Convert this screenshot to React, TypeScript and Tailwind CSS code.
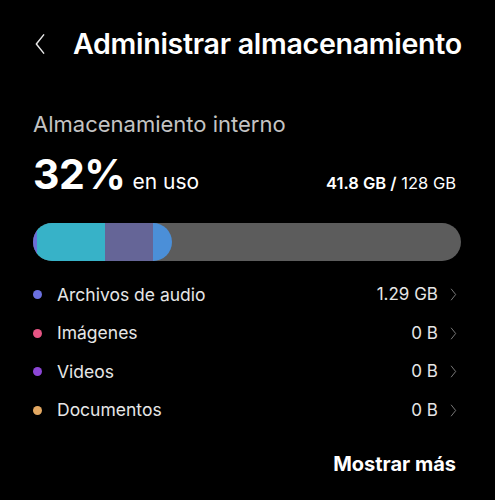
import React from 'react';

interface Category {
  label: string;
  value: string;
  dot: string;
}

const categories: Category[] = [
  { label: 'Archivos de audio', value: '1.29 GB', dot: 'bg-[#6b70e0]' },
  { label: 'Imágenes', value: '0 B', dot: 'bg-[#e65584]' },
  { label: 'Videos', value: '0 B', dot: 'bg-[#8c46d6]' },
  { label: 'Documentos', value: '0 B', dot: 'bg-[#e3a862]' },
];

const Chevron: React.FC<{ className?: string; dir?: 'left' | 'right' }> = ({ className, dir = 'right' }) => (
  <svg className={className} viewBox="0 0 12 24" fill="none" stroke="currentColor" strokeWidth={1.6} strokeLinecap="round" strokeLinejoin="round">
    {dir === 'right' ? <path d="M2 2l8 10-8 10" /> : <path d="M10 2L2 12l8 10" />}
  </svg>
);

const CategoryRow: React.FC<{ item: Category }> = ({ item }) => (
  <div className="flex items-center h-[38.5px]">
    <span className={`w-[9px] h-[9px] rounded-full ${item.dot}`} />
    <span className="ml-[15px] text-[17.5px] text-[#e6e6e6] flex-1">{item.label}</span>
    <span className="text-[17px] text-[#e6e6e6]">{item.value}</span>
    <Chevron className="w-[7px] h-[13px] ml-[12px] mr-[4px] text-[#8a8a8a]" />
  </div>
);

export default function App() {
  return (
    <div className="w-[495px] h-[500px] bg-black text-white overflow-hidden" style={{ fontFamily: 'Inter, "Noto Sans", sans-serif' }}>
      {/* Header */}
      <div className="flex items-center pl-[34px] pt-[26px] h-[62px]">
        <Chevron dir="left" className="w-[12px] h-[22px] text-[#e8e8e8]" />
        <h1 className="ml-[27px] text-[28.6px] font-semibold leading-[36px] tracking-[-0.3px]">Administrar almacenamiento</h1>
      </div>

      <div className="px-[33px] pr-[34px]">
        <div className="mt-[48px] text-[22px] leading-[28px] text-[#c4c4c4]">Almacenamiento interno</div>

        <div className="flex items-baseline mt-[14px]">
          <span className="text-[41px] font-bold leading-[44px] tracking-[-0.5px]">32%</span>
          <span className="ml-[7px] text-[21px]">en uso</span>
          <span className="ml-auto text-[16.5px] mr-[5px]">
            <span className="font-semibold">41.8 GB /</span> 128 GB
          </span>
        </div>

        {/* Usage bar */}
        <div className="mt-[25px] h-[38px] w-full rounded-full bg-[#5c5c5c] overflow-hidden flex">
          <div className="flex h-full w-[139px] rounded-r-full overflow-hidden">
            <div className="w-[4px] bg-[#6b6fd8]" />
            <div className="w-[68px] bg-[#37b2c8]" />
            <div className="w-[48px] bg-[#656597]" />
            <div className="flex-1 bg-[#4b8fd8]" />
          </div>
        </div>

        <div className="mt-[15px]">
          {categories.map((c) => (
            <CategoryRow key={c.label} item={c} />
          ))}
        </div>

        <div className="flex justify-end mt-[19px] mr-[5px]">
          <button className="text-[20px] font-bold">Mostrar más</button>
        </div>
      </div>
    </div>
  );
}
